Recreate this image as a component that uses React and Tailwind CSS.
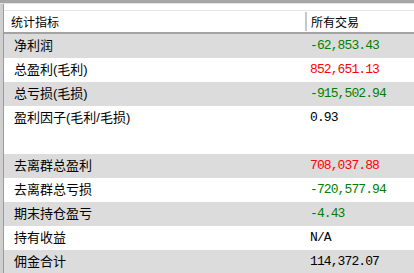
import React from 'react';

const rows = [
  { label: '净利润', value: '-62,853.43', tone: 'green', shade: true },
  { label: '总盈利(毛利)', value: '852,651.13', tone: 'red' },
  { label: '总亏损(毛损)', value: '-915,502.94', tone: 'green', shade: true },
  { label: '盈利因子(毛利/毛损)', value: '0.93', tone: 'black' },
  { label: '', value: '', tone: 'black' },
  { label: '去离群总盈利', value: '708,037.88', tone: 'red', shade: true },
  { label: '去离群总亏损', value: '-720,577.94', tone: 'green' },
  { label: '期末持仓盈亏', value: '-4.43', tone: 'green', shade: true },
  { label: '持有收益', value: 'N/A', tone: 'black' },
  { label: '佣金合计', value: '114,372.07', tone: 'black', shade: true },
];

const toneClass = {
  green: 'text-[#008000]',
  red: 'text-[#ff0000]',
  black: 'text-black',
};

export default function App() {
  return (
    <div className="w-[414px] h-[273px] overflow-hidden bg-white flex flex-col font-['Liberation_Sans','Noto_Sans_CJK_SC',sans-serif]">
      {/* 顶部窗口边 */}
      <div className="h-[3px] bg-[#a6a6a6] shrink-0" />
      <div className="h-px bg-[#e3e3e3] shrink-0" />
      <div className="flex flex-1 min-h-0">
        <div className="w-[4px] bg-[#cfcfcf] border-r border-[#9a9a9a] shrink-0" />
        <div className="flex-1 flex flex-col">
          <div className="h-[6px] bg-white shrink-0" />
          {/* 表头 */}
          <div className="h-[24px] shrink-0 flex border-t border-[#e6e6e6] border-b-2 border-b-[#a3a3a3] text-[12px] text-black">
            <div className="w-[301px] pl-[7px] pt-[3px] flex items-center">统计指标</div>
            <div className="flex-1 my-[1px] border-l-2 border-[#c8c8c8] pl-[4px] pt-[2px] flex items-center">所有交易</div>
          </div>
          {rows.map((r, i) => (
            <div
              key={i}
              className={`h-[24px] flex items-center shrink-0 ${r.shade ? 'bg-[#dcdcdc]' : 'bg-white'}`}
            >
              <div className="w-[301px] pl-[10px] text-[13px] text-black whitespace-nowrap">{r.label}</div>
              <div className={`flex-1 pl-[5px] text-[13px] tracking-[-0.9px] font-['Liberation_Mono',monospace] ${toneClass[r.tone]}`}>
                {r.value}
              </div>
            </div>
          ))}
        </div>
      </div>
    </div>
  );
}
